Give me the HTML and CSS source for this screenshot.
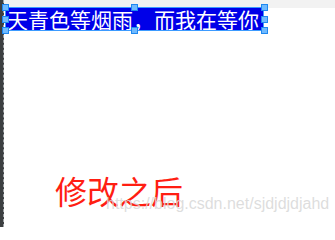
FILE: index.html
```html
<!DOCTYPE html>
<html>
<head>
<meta charset="utf-8">
<link rel="stylesheet" href="styles.css">
</head>
<body>
<div class="app">
  <div class="gutter"></div>
  <div class="canvas">
    <div class="strip"></div>
    <div class="box">
      <span class="text">天青色等烟雨，而我在等你</span>
      <i class="h h-tl"></i><i class="h h-ml"></i><i class="h h-bl"></i>
      <i class="h h-tm"></i><i class="h h-bm"></i>
      <i class="h h-tr"></i><i class="h h-mr"></i><i class="h h-br"></i>
    </div>
    <div class="caption">修改之后</div>
    <div class="watermark">https://blog.csdn.net/sjdjdjdjahd</div>
  </div>
</div>
</body>
</html>
```

FILE: styles.css
```css
html, body {
  margin: 0;
  padding: 0;
  background: #ffffff;
}
.app {
  display: flex;
  width: 335px;
  height: 227px;
  overflow: hidden;
}
.gutter {
  width: 3px;
  background: #3c3f41;
  border-right: 1px dashed #a0a4a8;
}
.canvas {
  flex: 1;
  position: relative;
  background: #ffffff;
}
.strip {
  height: 8px;
  background: #f2f2f2;
}
.box {
  position: relative;
  margin-left: 2px;
  width: 257px;
  height: 22px;
  background: #0000e8;
  outline: 1px solid #3d9bff;
  color: #ffffff;
  font-family: "Noto Sans CJK SC", sans-serif;
  font-size: 21px;
  line-height: 23px;
  white-space: nowrap;
  overflow: visible;
}
.text {
  display: block;
  padding-left: 1px;
}
.h {
  position: absolute;
  width: 5px;
  height: 5px;
  background: #6fbaff;
  border: 1px solid #1e88f0;
}
.h-tl { left: -4px; top: -4px; }
.h-ml { left: -4px; top: 8px; }
.h-bl { left: -4px; top: 19px; }
.h-tm { left: 125px; top: -4px; }
.h-bm { left: 125px; top: 19px; }
.h-tr { left: 255px; top: -4px; }
.h-mr { left: 255px; top: 8px; }
.h-br { left: 255px; top: 19px; }
.caption {
  margin-top: 140px;
  margin-left: 51px;
  color: #ff1e12;
  font-family: "Noto Sans CJK SC", sans-serif;
  font-size: 32px;
  line-height: 40px;
}
.watermark {
  position: absolute;
  left: 102px;
  top: 195px;
  font-family: "Liberation Sans", Arial, sans-serif;
  font-size: 16px;
  color: rgba(215, 215, 215, 0.85);
  white-space: nowrap;
}
```
